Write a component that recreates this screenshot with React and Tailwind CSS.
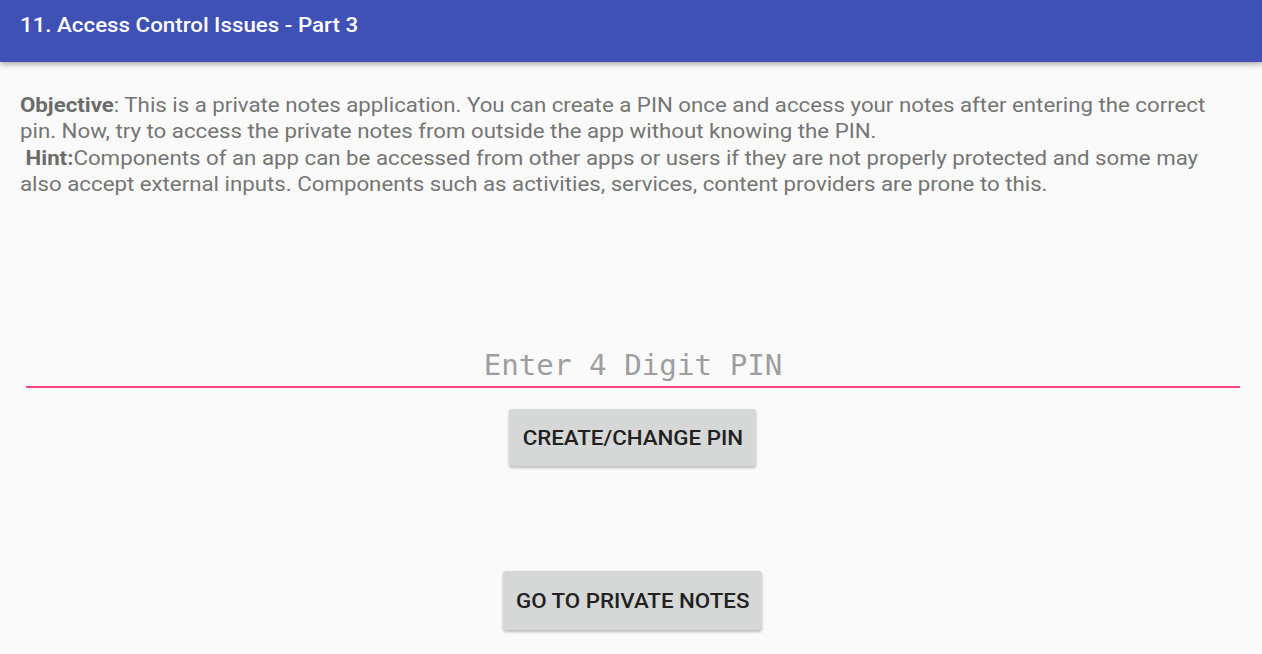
export default function App() {
  return (
    <div className="w-[1262px] h-[654px] bg-[#fafafa] overflow-hidden flex flex-col" style={{ fontFamily: "Roboto, 'Liberation Sans', sans-serif" }}>
      <div className="h-[62px] shrink-0 bg-[#3f51b5] flex items-center px-5 shadow-[0_2px_6px_rgba(0,0,0,0.35)] relative z-10">
        <span className="text-white text-[20px] font-medium -mt-[13px] origin-left scale-x-[1.115] whitespace-nowrap">11. Access Control Issues - Part 3</span>
      </div>
      <div className="px-5 pt-[30px] text-[20px] leading-[26.3px] text-[#757575]">
        <p className="origin-top-left scale-x-[1.113] whitespace-nowrap">
          <b className="font-bold text-[#6b6b6b]">Objective</b>: This is a private notes application. You can create a PIN once and access your notes after entering the correct
          <br />
          pin. Now, try to access the private notes from outside the app without knowing the PIN.
          <br />
          <b className="font-bold text-[#6b6b6b]">&nbsp;Hint:</b>Components of an app can be accessed from other apps or users if they are not properly protected and some may
          <br />
          also accept external inputs. Components such as activities, services, content providers are prone to this.
        </p>
      </div>
      <div className="mt-[146px] ml-[26px] mr-[22px] border-b-2 border-[#ff4081] h-[45px] flex items-center justify-center">
        <span className="text-[29.2px] text-[#9e9e9e] mt-[2px]" style={{ fontFamily: "'DejaVu Sans Mono', monospace" }}>Enter 4 Digit PIN</span>
      </div>
      <div className="flex justify-center mt-[21px]">
        <div className="w-[247px] h-[57px] ml-[3px] bg-[#d6d7d7] rounded-[3px] shadow-[0_2px_3px_rgba(0,0,0,0.25)] flex items-center justify-center text-[20px] font-medium text-[#212121]">
          <span className="scale-x-[1.115] whitespace-nowrap">CREATE/CHANGE PIN</span>
        </div>
      </div>
      <div className="flex justify-center mt-[105px]">
        <div className="w-[259px] h-[59px] ml-[3px] bg-[#d6d7d7] rounded-[3px] shadow-[0_2px_3px_rgba(0,0,0,0.25)] flex items-center justify-center text-[20px] font-medium text-[#212121]">
          <span className="scale-x-[1.115] whitespace-nowrap">GO TO PRIVATE NOTES</span>
        </div>
      </div>
    </div>
  );
}
